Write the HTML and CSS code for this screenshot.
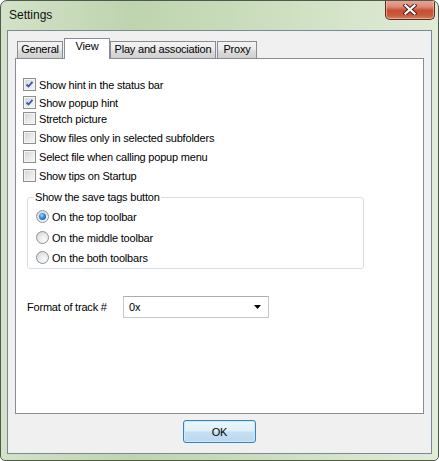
FILE: index.html
```html
<!DOCTYPE html>
<html>
<head>
<meta charset="utf-8">
<title>Settings</title>
<link rel="stylesheet" href="styles.css">
</head>
<body>
<div class="window">
  <div class="titlebar">
    <span class="title">Settings</span>
    <div class="close">
      <svg width="14" height="11" viewBox="0 0 14 11">
        <path d="M2.5 1.5 L11.5 9.5 M11.5 1.5 L2.5 9.5" stroke="#4a2420" stroke-width="4.2" stroke-linecap="square" fill="none"/>
        <path d="M2.5 1.5 L11.5 9.5 M11.5 1.5 L2.5 9.5" stroke="#ffffff" stroke-width="2.2" stroke-linecap="square" fill="none"/>
      </svg>
    </div>
  </div>
  <div class="client">
    <div class="tabs">
      <div class="tab t-general">General</div>
      <div class="tab active t-view">View</div>
      <div class="tab t-play">Play and association</div>
      <div class="tab t-proxy">Proxy</div>
    </div>
    <div class="panel">
      <div class="check r1"><span class="box"><svg width="11" height="11" viewBox="0 0 11 11"><path d="M2.5 5.5 L4.5 7.5 L8.5 2.8" stroke="#3a58a6" stroke-width="1.8" fill="none"/></svg></span>Show hint in the status bar</div>
      <div class="check r2"><span class="box"><svg width="11" height="11" viewBox="0 0 11 11"><path d="M2.5 5.5 L4.5 7.5 L8.5 2.8" stroke="#3a58a6" stroke-width="1.8" fill="none"/></svg></span>Show popup hint</div>
      <div class="check r3"><span class="box"></span>Stretch picture</div>
      <div class="check r4"><span class="box"></span>Show files only in selected subfolders</div>
      <div class="check r5"><span class="box"></span>Select file when calling popup menu</div>
      <div class="check r6"><span class="box"></span>Show tips on Startup</div>

      <fieldset class="group">
        <legend>Show the save tags button</legend>
        <div class="radio q1"><span class="circle on"><span class="dot"></span></span>On the top toolbar</div>
        <div class="radio q2"><span class="circle"></span>On the middle toolbar</div>
        <div class="radio q3"><span class="circle"></span>On the both toolbars</div>
      </fieldset>

      <div class="format-row">
        <span class="format-label">Format of track #</span>
        <div class="combo">
          <span class="combo-text">0x</span>
          <svg class="arrow" width="7" height="4" viewBox="0 0 7 4"><path d="M0 0 H7 L3.5 4 Z" fill="#000"/></svg>
        </div>
      </div>
    </div>
    <div class="buttons">
      <div class="ok">OK</div>
    </div>
  </div>
</div>
</body>
</html>
```
FILE: styles.css
```css
html, body {
  margin: 0;
  padding: 0;
  background: #ffffff;
}

body {
  font-family: "Liberation Sans", Arial, sans-serif;
  font-size: 11px;
  letter-spacing: -0.2px;
  color: #000;
}

.window {
  box-sizing: border-box;
  width: 439px;
  height: 461px;
  border: 1px solid #4f5a4c;
  border-radius: 7px 7px 5px 5px;
  background: linear-gradient(90deg, #d3e2c8 0%, #bed4ae 30%, #c9dcbb 55%, #d6e5cb 80%, #e0ebd8 100%);
  padding: 0 6px 6px 6px;
  display: flex;
  flex-direction: column;
  overflow: hidden;
}

.titlebar {
  height: 29px;
  display: flex;
  align-items: flex-start;
  flex-shrink: 0;
}

.title {
  font-size: 12px;
  letter-spacing: 0;
  margin-left: 2px;
  margin-top: 7px;
  color: #111;
}

.close {
  margin-left: auto;
  margin-right: -3px;
  margin-top: -1px;
  width: 50px;
  height: 20px;
  box-sizing: border-box;
  border: 1px solid #5b2a22;
  border-top: none;
  border-radius: 0 0 5px 5px;
  background: linear-gradient(#e9a999 0%, #dd8a77 35%, #c94e33 55%, #c75a3e 80%, #d7805f 100%);
  box-shadow: inset 0 0 0 1px rgba(255, 210, 195, 0.55);
  display: flex;
  align-items: center;
  justify-content: center;
}

.client {
  flex: 1;
  border: 1px solid #7a8794;
  background: #f0f0f0;
  padding: 7px 7px 0 7px;
  display: flex;
  flex-direction: column;
}

.tabs {
  display: flex;
  align-items: flex-end;
  height: 20px;
}

.tab {
  box-sizing: border-box;
  height: 17px;
  line-height: 15px;
  border: 1px solid #898c95;
  border-bottom: none;
  background: linear-gradient(#f3f3f3 0%, #ebebeb 45%, #dddddd 55%, #cfcfcf 100%);
  text-align: center;
  white-space: nowrap;
}

.tab.active {
  height: 21px;
  margin-bottom: -1px;
  background: #ffffff;
  position: relative;
  z-index: 1;
}

.t-general { width: 46px; margin-left: 2px; }
.t-view { width: 46px; margin-left: 1px; }
.t-play { width: 106px; margin-left: 0; }
.t-proxy { width: 40px; margin-left: 1px; }

.panel {
  box-sizing: border-box;
  height: 356px;
  border: 1px solid #898c95;
  background: #ffffff;
  padding: 19px 0 0 7px;
}

.check {
  display: flex;
  align-items: center;
  height: 13px;
  white-space: nowrap;
}

.r2 { margin-top: 5px; }
.r3 { margin-top: 3px; }
.r4 { margin-top: 6px; }
.r5 { margin-top: 6px; }
.r6 { margin-top: 6px; }

.box {
  box-sizing: border-box;
  width: 13px;
  height: 13px;
  border: 1px solid #8e8f8f;
  margin-right: 3px;
  background: linear-gradient(135deg, #d0d3d8 0%, #e6e8ea 50%, #f8f8f8 100%);
  box-shadow: inset 0 0 0 1px #f4f4f4;
  display: flex;
  align-items: center;
  justify-content: center;
  flex-shrink: 0;
}

.group {
  box-sizing: border-box;
  width: 337px;
  margin: 9px 0 0 4px;
  padding: 0 0 4px 8px;
  border: 1px solid #d5dfe5;
  border-radius: 3px;
  min-width: 0;
}

.group legend {
  padding: 0 1px;
  margin-left: -2px;
  line-height: 13px;
}

.radio {
  display: flex;
  align-items: center;
  height: 13px;
  white-space: nowrap;
}

.q1 { margin-top: 6px; }
.q2 { margin-top: 8px; }
.q3 { margin-top: 7px; }

.circle {
  box-sizing: border-box;
  width: 13px;
  height: 13px;
  border-radius: 50%;
  border: 1px solid #8f9397;
  background: radial-gradient(circle at 65% 70%, #fbfbfb 0%, #e8e9ea 50%, #c9cccf 100%);
  margin-right: 3px;
  display: flex;
  align-items: center;
  justify-content: center;
  flex-shrink: 0;
}

.dot {
  width: 7px;
  height: 7px;
  border-radius: 50%;
  background: radial-gradient(circle at 40% 35%, #9ed6fb 0%, #2f8ad6 45%, #0e4a93 100%);
}

.format-row {
  display: flex;
  align-items: center;
  margin: 27px 0 0 4px;
}

.format-label {
  width: 96px;
}

.combo {
  box-sizing: border-box;
  width: 146px;
  height: 22px;
  border: 1px solid #c5c8cc;
  border-top-color: #abadb3;
  background: #fff;
  display: flex;
  align-items: center;
  padding-left: 5px;
}

.combo-text {
  flex: 1;
}

.arrow {
  margin-right: 7px;
}

.buttons {
  display: flex;
  justify-content: center;
  margin-top: 6px;
}

.ok {
  box-sizing: border-box;
  width: 73px;
  height: 23px;
  border: 1px solid #3c7fb1;
  border-radius: 3px;
  background: linear-gradient(#ecf6fd 0%, #dfeffa 48%, #c6e0f3 52%, #b9d7ee 100%);
  box-shadow: inset 0 0 0 1px #c9ebfb;
  display: flex;
  align-items: center;
  justify-content: center;
}
```
